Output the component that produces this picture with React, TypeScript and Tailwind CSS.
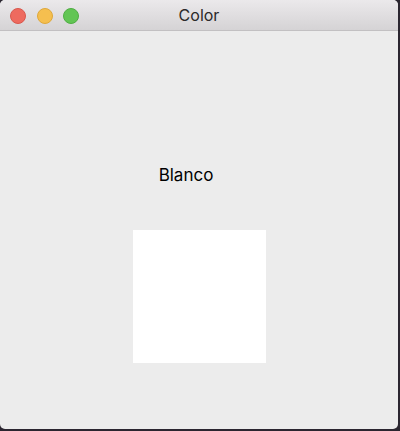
import React from "react";

export default function App() {
  return (
    <div className="w-[400px] h-[431px] bg-[#2b2630] overflow-hidden" style={{ fontFamily: '"Helvetica Neue", "Liberation Sans", Arial, sans-serif' }}>
      <div className="w-[398px] h-[429px] rounded-[5px] overflow-hidden bg-[#ececec] flex flex-col">
        <div className="relative h-[31px] shrink-0 bg-gradient-to-b from-[#ebe9eb] to-[#d5d3d5] border-b border-[#c2c0c2] flex items-center justify-center">
          <div className="absolute left-[10px] top-[8px] flex gap-[10.5px]">
            <div className="w-[16px] h-[16px] rounded-full bg-[#ee6a5f] border border-[#d9574c]" />
            <div className="w-[16px] h-[16px] rounded-full bg-[#f5bf4f] border border-[#dfa83a]" />
            <div className="w-[16px] h-[16px] rounded-full bg-[#62c554] border border-[#4fae43]" />
          </div>
          <span className="text-[16px] text-[#2a2a2a]" style={{ fontFamily: '"Inter", "Liberation Sans", sans-serif' }}>Color</span>
        </div>
        <div className="flex flex-col items-center">
          <div className="mt-[132px] h-[24px] text-[17px] text-black leading-[24px] mr-[26px]" style={{ fontFamily: '"Inter", "Liberation Sans", sans-serif' }}>Blanco</div>
          <div className="mt-[43px] w-[133px] h-[133px] bg-white" />
        </div>
      </div>
    </div>
  );
}
